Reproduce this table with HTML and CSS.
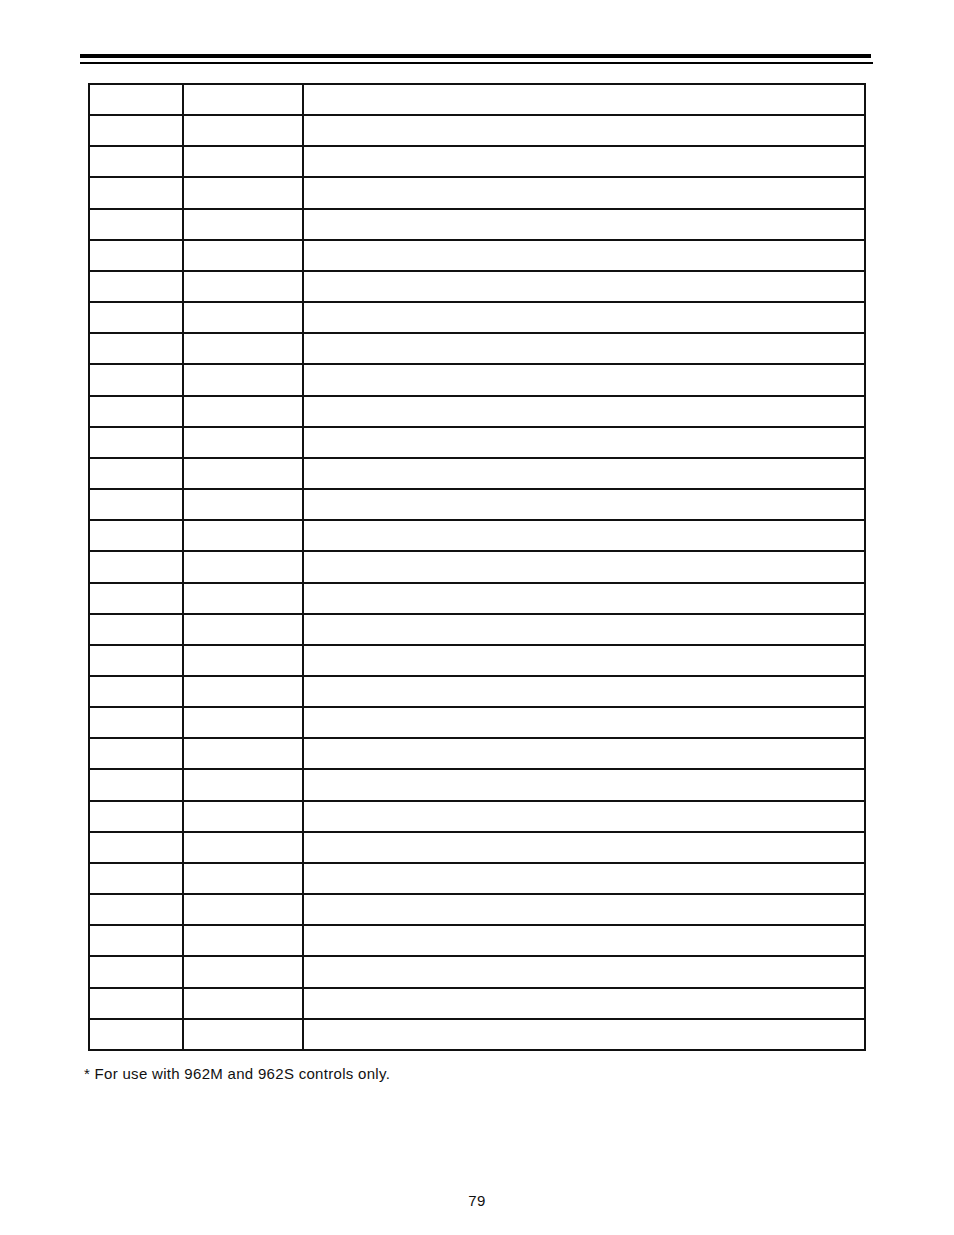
FILE: index.html
```html
<!DOCTYPE html>
<html>
<head>
<meta charset="utf-8">
<link rel="stylesheet" href="styles.css">
</head>
<body>
<div class="page">
  <div class="rule-thick"></div>
  <div class="rule-thin"></div>
  <table class="grid">
    <tbody>
      <tr><td></td><td></td><td></td></tr>
      <tr><td></td><td></td><td></td></tr>
      <tr><td></td><td></td><td></td></tr>
      <tr><td></td><td></td><td></td></tr>
      <tr><td></td><td></td><td></td></tr>
      <tr><td></td><td></td><td></td></tr>
      <tr><td></td><td></td><td></td></tr>
      <tr><td></td><td></td><td></td></tr>
      <tr><td></td><td></td><td></td></tr>
      <tr><td></td><td></td><td></td></tr>
      <tr><td></td><td></td><td></td></tr>
      <tr><td></td><td></td><td></td></tr>
      <tr><td></td><td></td><td></td></tr>
      <tr><td></td><td></td><td></td></tr>
      <tr><td></td><td></td><td></td></tr>
      <tr><td></td><td></td><td></td></tr>
      <tr><td></td><td></td><td></td></tr>
      <tr><td></td><td></td><td></td></tr>
      <tr><td></td><td></td><td></td></tr>
      <tr><td></td><td></td><td></td></tr>
      <tr><td></td><td></td><td></td></tr>
      <tr><td></td><td></td><td></td></tr>
      <tr><td></td><td></td><td></td></tr>
      <tr><td></td><td></td><td></td></tr>
      <tr><td></td><td></td><td></td></tr>
      <tr><td></td><td></td><td></td></tr>
      <tr><td></td><td></td><td></td></tr>
      <tr><td></td><td></td><td></td></tr>
      <tr><td></td><td></td><td></td></tr>
      <tr><td></td><td></td><td></td></tr>
      <tr><td></td><td></td><td></td></tr>
    </tbody>
  </table>
  <p class="note">* For use with 962M and 962S controls only.</p>
  <div class="pagenum">79</div>
</div>
</body>
</html>
```

FILE: styles.css
```css
html, body {
  margin: 0;
  padding: 0;
  background: #ffffff;
}

body {
  font-family: "Liberation Sans", Arial, Helvetica, sans-serif;
  color: #111111;
}

.page {
  width: 954px;
  padding-top: 54px;
}

.rule-thick {
  margin-left: 80px;
  width: 791px;
  height: 4px;
  background: #000000;
}

.rule-thin {
  margin-left: 80px;
  margin-top: 4px;
  width: 793px;
  height: 2px;
  background: #000000;
}

.grid {
  margin-top: 19px;
  margin-left: 88px;
  width: 778px;
  height: 968px;
  table-layout: fixed;
  border-collapse: separate;
  border-spacing: 0;
  border-top: 2px solid #111111;
  border-left: 2px solid #111111;
  box-sizing: border-box;
}

.grid td {
  padding: 0;
  border-right: 2px solid #111111;
  border-bottom: 2px solid #111111;
}

.grid td:nth-child(1) { width: 92px; }
.grid td:nth-child(2) { width: 118px; }
.grid td:nth-child(3) { width: 560px; }

.note {
  margin: 14px 0 0 84px;
  font-size: 15px;
  line-height: 17px;
  letter-spacing: 0.3px;
}

.pagenum {
  margin-top: 110px;
  text-align: center;
  font-size: 15px;
  line-height: 17px;
  letter-spacing: 0.3px;
}
```
